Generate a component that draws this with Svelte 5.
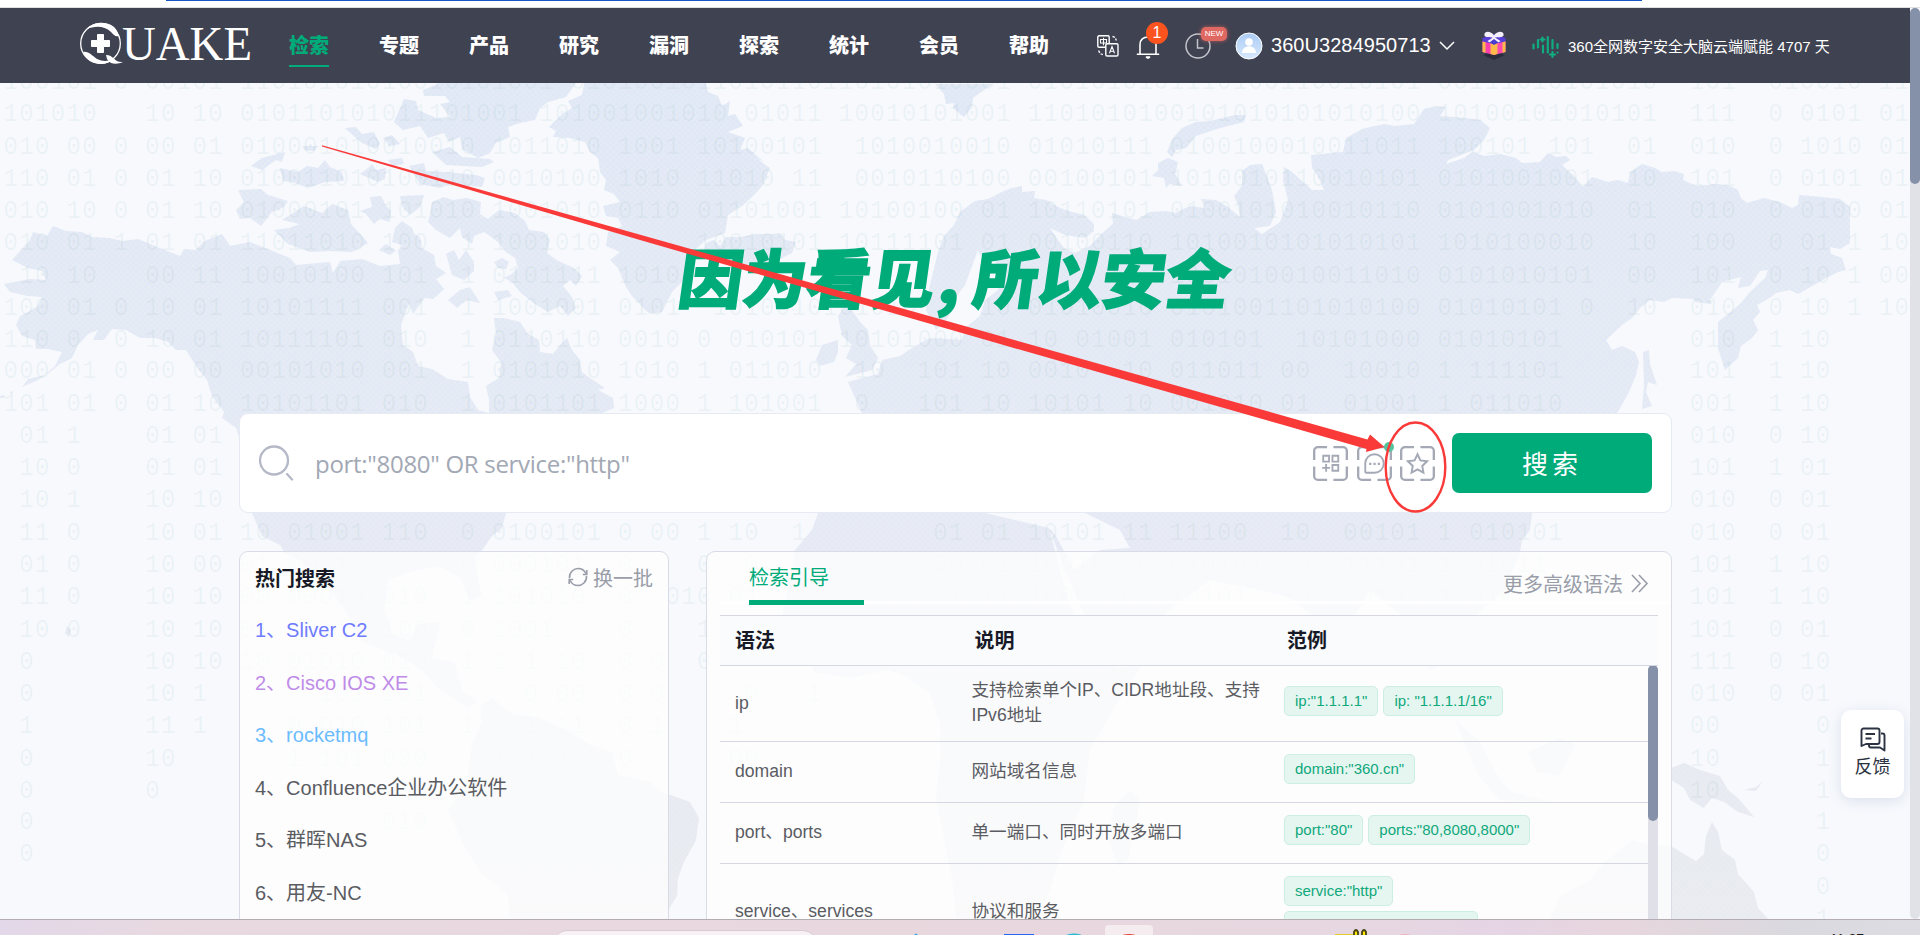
<script>
  const nav = ['检索', '专题', '产品', '研究', '漏洞', '探索', '统计', '会员', '帮助'];

  const hot = [
    { text: 'Sliver C2', color: '#6f7bff' },
    { text: 'Cisco IOS XE', color: '#c08be8' },
    { text: 'rocketmq', color: '#6bbcff' },
    { text: 'Confluence企业办公软件', color: '#5a5c62' },
    { text: '群晖NAS', color: '#5a5c62' },
    { text: '用友-NC', color: '#5a5c62' }
  ];

  const syntax = [
    { name: 'ip', desc: '支持检索单个IP、CIDR地址段、支持IPv6地址', tags: ['ip:"1.1.1.1"', 'ip: "1.1.1.1/16"'] },
    { name: 'domain', desc: '网站域名信息', tags: ['domain:"360.cn"'] },
    { name: 'port、ports', desc: '单一端口、同时开放多端口', tags: ['port:"80"', 'ports:"80,8080,8000"'] },
    { name: 'service、services', desc: '协议和服务', tags: ['service:"http"', 'services:"rtsp,https,telnet"'] }
  ];

  // Digit rows of the backdrop, as "column:digits" groups.
  const bits = [
    '0:100101 7:0 9:00101 15:11010101010010101001 36:010100101 44:10101101 53:10101010001 65:0101010101110100110010101 91:00111010101010 107:101 112:010010 119:11',
    '0:101010 9:10 12:10 15:010110101011101001 34:101001001010 47:01011 53:10010101001 65:1101010100101010101010100 91:10100101010101 107:111 112:0 114:0101 119:01',
    '0:010 4:00 7:0 9:00 12:01 15:010001010010010 31:1011010 39:1001 44:10100101 54:1010010010 65:01010111 74:0100100010011011 91:100101 98:101 103:01 107:010 112:0 114:1010 119:01',
    '0:110 4:01 7:0 9:01 12:10 15:010011010100110 31:0010100 39:1010 44:11010 50:11 54:0010110100 65:00100101 74:1010010110010101 91:0101001001 103:10 107:101 112:0 114:0101 119:01',
    '0:010 4:10 7:0 9:01 12:10 15:01000101 24:101010 31:1001010 39:0110 44:01101001 53:10100100 62:01 65:10110101 74:0100101010010110 91:0101001010 103:01 107:010 112:0 114:0100 119:01',
    '0:010 4:01 7:1 9:01 12:01 15:11011010 24:100 29:1 31:1001010 44:10010101 53:10111101 62:01 65:00100110 74:1010010101010101 91:1010100010 103:10 107:100 112:0 114:01 117:1 119:10',
    '1:10 4:10 9:00 12:11 15:10010100 24:101 29:1 31:0101111 39:1010 74:1001010010011010 91:0101010101 103:00 107:101 112:0 114:10 117:1 119:00',
    '0:100 4:01 7:0 9:10 12:01 15:10101111 24:001 29:1 31:1001001 39:0101 45:10100101 53:01010 62:10 65:01010010 74:0101001101010100 91:01010101 100:0 103:10 107:010 112:0 114:10 117:1 119:10',
    '0:110 4:0 7:0 9:10 12:01 15:10111101 24:010 29:1 31:0110110 39:0010 44:0 46:010101 53:10101000 62:01 65:10 68:01001 74:010101 82:10101000 91:01010101 107:010 112:1 114:10',
    '0:000 4:01 7:0 9:00 12:00 15:00101010 24:001 29:1 31:0101010 39:1010 44:1 46:011010 54:10 58:101 62:10 65:0010 71:10 74:011011 81:00 85:10010 91:1 93:111101 107:101 112:1 114:10',
    '0:101 4:01 7:0 9:01 12:10 15:10101101 24:010 29:1 31:0101101 39:100 42:0 44:1 46:101001 54:0 58:101 62:10 65:10101 71:10 74:001010 81:01 85:01001 91:1 93:011010 107:001 112:1 114:10',
    '1:01 4:1 9:01 12:01 107:010 112:0 114:10',
    '1:10 4:0 9:01 12:01 107:101 112:1 114:01',
    '1:10 4:1 9:10 12:10 107:010 112:0 114:01',
    '1:11 4:0 9:10 12:01 15:10 18:01001 24:110 29:0 31:0100101 39:0 41:00 44:1 46:10 50:1 59:01 62:01 65:10101 71:11 74:11100 81:10 85:00101 91:1 93:010101 107:010 112:0 114:01',
    '1:01 4:0 9:10 12:00 15:01 18:0001 29:0 31:000101 39:0 44:0 47:0 59:00 62:01 65:10010 71:10 74:010101 81:10 85:11101 91:1 93:01011 107:101 112:1 114:10',
    '1:11 4:0 9:10 12:10 15:00 18:00010 24:010 29:1 31:101010 39:0 42:01 44:0 46:01 59:11 62:11 65:10000 71:01 74:10101 81:10 85:0010 91:1 93:010 107:101 112:1 114:10',
    '1:10 4:0 9:10 12:10 15:01 18:10110 24:100 29:0 31:1001 39:0 44:1 107:101 112:0 114:01',
    '1:0 9:10 12:10 15:10 18:01010 24:010 29:1 31:1 33:1 35:10 39:0 41:0 44:0 107:111 112:0 114:10',
    '1:0 9:10 12:1 20:101 24:101 33:0 35:00 39:0 41:0 47:0 51:1 107:010 112:0 114:01',
    '1:1 9:11 12:1 18:0 20:010 24:101 29:1 33:1 35:11 39:0 41:1 46:1 107:00 115:0',
    '1:0 9:10 18:1 20:101 24:000 31:1 33:1 35:10 39:0 46:00 107:10 115:1',
    '1:0 9:0 107:10 115:1',
    '1:0 24:010 115:1',
    '1:0 115:0',
    '115:0',
    '115:1'
  ];
  const expand = (row) =>
    row.split(' ').reduce((line, part) => {
      const [col, digits] = part.split(':');
      return line.padEnd(Number(col), ' ') + digits;
    }, '');
  const bitText = bits.map(expand).join('\n');

  const land = [
    // North America with Alaska and Mexico
    'M12 260L30 240L33 232L47 236L53 226L66 231L82 232L92 237L110 238L122 241L138 239L155 246L180 256L184 249L195 250L205 241L222 234L230 246L250 242L275 252L290 258L296 265L330 262L333 273L340 261L362 259L380 266L400 264L398 250L406 243L410 232L420 237L422 248L434 255L436 266L446 273L436 279L444 289L433 299L425 298L418 307L413 314L409 303L401 325L403 345L413 352L418 366L432 369L448 379L468 382L470 397L478 410L489 413L489 400L486 386L499 378L501 362L492 350L496 334L494 318L504 318L520 322L528 334L539 340L540 352L553 354L560 345L567 338L572 350L580 360L582 372L590 378L605 388L598 390L613 398L614 408L600 414L560 460L506 513L502 528L492 536L483 549L475 556L478 580L482 596L470 600L460 578L440 566L410 572L388 580L384 610L392 634L410 640L418 624L440 622L436 642L432 658L455 662L462 690L478 702L468 708L440 690L420 668L396 654L362 642L345 610L335 596L300 560L285 553L280 545L262 536L252 513L240 440L236 428L222 418L224 412L212 396L207 380L196 366L186 350L176 350L168 342L155 338L140 338L126 330L112 329L104 340L93 340L98 330L88 334L78 345L72 358L60 364L50 372L38 380L22 387L28 379L45 375L55 366L62 352L48 349L36 349L35 340L22 336L16 325L20 316L28 312L38 306L42 297L28 296L10 292L4 284L30 279L46 280L42 271L28 268Z',
    // Greenland
    'M585 80L582 95L568 101L572 108L560 116L549 127L556 131L553 137L570 138L585 142L590 152L598 158L600 172L606 180L604 190L614 194L620 202L603 206L606 216L618 218L622 226L608 232L606 246L620 252L610 260L618 268L625 285L632 296L645 310L650 314L662 312L672 292L682 282L690 262L697 248L706 240L725 233L728 215L742 206L753 196L763 185L770 168L756 158L764 162L748 148L740 150L745 138L728 132L743 126L735 114L728 116L730 101L722 106L718 96L708 92L705 80Z',
    // Arctic islands
    'M423 90L440 83L576 83L566 97L548 102L540 108L535 120L520 123L508 127L510 137L496 143L490 153L478 158L462 149L460 137L449 142L444 133L428 138L420 126L403 130L394 122L404 99L416 101L418 110L436 118L450 117L440 104L450 102L445 96L424 96Z',
    'M345 128L356 127L362 134L374 132L380 144L376 149L362 143L355 137Z M383 138L392 135L400 144L390 146Z M303 146L318 146L314 151L304 150Z M251 166L262 158L285 152L282 162L276 160L262 170Z M280 168L298 172L307 166L318 168L325 160L330 167L342 172L344 181L325 182L308 188L292 182L283 181Z M360 174L368 168L372 164L376 170L386 168L385 179L378 182Z M388 160L402 158L404 164L392 166Z M432 152L450 147L462 157L490 159L494 162L482 167L446 165Z M409 166L424 163L426 171L446 172L476 175L485 178L482 187L450 184L440 188L420 184Z',
    'M238 190L261 189L268 195L288 201L284 207L272 212L261 226L250 218L240 219L236 210L244 202Z M274 230L289 228L300 224L282 220L304 206L322 213L332 204L348 210L351 224L362 236L368 243L352 252L330 251L310 252L288 244Z M360 211L372 207L370 197L381 196L385 204L391 211L390 222L380 219L374 224L366 214Z M400 196L424 195L420 207L410 215L402 206Z M395 228L402 221L412 228L417 240L421 252L412 253L405 246L392 242Z M379 250L386 244L396 251L390 255Z M446 254L454 250L459 260L462 256L466 250L474 262L474 271L464 280L452 275Z M494 262L502 258L509 262L506 269L498 268Z',
    'M430 215L432 202L444 197L453 200L467 198L481 202L480 214L488 219L499 210L515 213L525 221L529 230L544 232L550 240L547 253L558 261L574 268L582 276L576 286L570 280L563 286L572 297L576 308L568 316L560 306L548 312L535 304L520 292L512 282L504 278L512 274L518 268L515 258L506 252L498 242L490 236L484 232L474 236L472 244L462 237L460 228L450 238L436 230L428 222Z M448 300L460 290L470 287L480 303L466 300L457 308Z M494 292L508 290L512 296L498 300Z',
    'M706 243L714 240L720 246L726 237L740 237L756 234L773 234L780 233L785 240L796 242L792 253L776 261L750 268L730 265L716 257L704 252Z',
    // Svalbard and Novaya Zemlya
    'M935 84L944 94L946 104L954 103L953 108L960 114L964 117L972 107L973 98L984 90L992 84Z M1167 152L1172 139L1182 128L1196 122L1210 121L1235 115L1246 115L1244 122L1220 128L1196 136L1186 148L1176 150L1172 157Z M1152 176L1158 170L1158 163L1168 158L1178 162L1175 174L1182 186L1170 184L1166 188L1164 178Z',
    // Eurasia
    'M938 252L944 236L954 225L960 212L975 201L988 199L996 195L1004 191L1012 188L1022 186L1022 192L1035 191L1034 198L1046 200L1060 208L1072 212L1084 215L1094 224L1094 231L1085 238L1065 235L1050 228L1058 240L1064 248L1075 253L1090 246L1100 235L1113 224L1112 213L1122 216L1136 220L1150 212L1166 211L1175 213L1190 206L1205 208L1201 199L1216 200L1228 207L1240 217L1238 205L1234 196L1242 186L1242 171L1250 165L1262 164L1266 174L1272 190L1276 212L1270 226L1254 228L1262 234L1280 222L1288 200L1283 180L1284 167L1292 172L1312 190L1324 190L1318 176L1312 168L1311 155L1343 152L1346 138L1362 129L1384 124L1395 126L1414 124L1424 109L1436 106L1446 107L1440 116L1466 118L1480 120L1490 128L1484 140L1474 150L1456 157L1448 160L1446 164L1464 158L1472 152L1485 156L1500 154L1516 158L1522 163L1540 162L1548 153L1556 157L1566 156L1570 160L1562 165L1574 176L1583 187L1592 177L1608 182L1618 180L1628 183L1630 172L1642 164L1655 168L1662 172L1674 171L1684 174L1683 180L1696 186L1718 184L1730 186L1738 190L1741 198L1747 203L1764 198L1780 202L1792 208L1798 205L1799 195L1822 197L1840 199L1850 207L1850 243L1840 249L1830 247L1831 254L1842 258L1846 270L1838 272L1826 278L1814 285L1798 294L1790 290L1776 293L1771 297L1757 305L1760 312L1753 320L1758 330L1752 338L1741 346L1738 358L1725 370L1718 348L1718 322L1728 314L1740 304L1750 292L1765 278L1768 270L1760 271L1750 286L1738 288L1741 277L1722 282L1710 300L1712 304L1695 302L1694 299L1672 298L1664 302L1650 300L1640 308L1632 318L1622 325L1606 340L1612 350L1622 346L1635 352L1639 362L1636 375L1630 390L1622 405L1617 413L1560 460L1532 513L1530 530L1522 540L1520 552L1505 590L1470 620L1440 616L1450 660L1430 670L1410 640L1400 614L1370 590L1340 640L1330 660L1312 615L1290 598L1260 590L1210 580L1170 610L1110 660L1095 640L1065 570L1049 528L1056 536L1074 570L1100 550L1130 548L1120 530L1085 513L1040 440L1024 413L985 413L862 413L848 382L878 374L882 360L900 356L915 346L930 338L962 340L965 328L980 316L985 300L998 290L1002 272L996 262L980 255L978 250L965 285L954 300L948 318L936 330L926 310L930 285Z',
    // British Isles, Sakhalin
    'M838 316L846 304L852 310L860 322L868 330L870 345L878 358L872 370L845 377L856 364L846 358L852 345L842 336Z M816 360L822 345L838 340L838 352L834 362L820 366Z M1643 352L1649 350L1650 364L1657 385L1648 382L1646 392L1652 406L1642 409L1644 385Z',
    // Africa and Madagascar
    'M818 513L812 530L795 550L788 590L782 612L792 640L815 672L850 678L888 670L906 676L930 694L940 724L940 760L936 800L944 840L952 880L958 930L1035 930L1050 890L1062 850L1084 800L1090 750L1110 715L1142 665L1116 668L1088 640L1068 600L1049 528L985 513Z M1114 806L1130 790L1140 800L1128 860L1118 866L1108 840Z',
    // South America
    'M480 706L492 698L512 714L540 718L570 732L590 745L612 752L618 775L650 782L662 792L690 802L699 818L696 840L684 862L678 878L677 896L668 910L666 935L510 935L508 895L480 872L464 846L448 810L466 786L472 744L482 722Z',
    // Indonesia, New Guinea, Australia
    'M1455 720L1480 742L1500 780L1512 792L1550 802L1500 800L1478 775Z M1528 752L1560 738L1575 745L1560 775L1536 772Z M1671 768L1684 763L1700 770L1720 776L1728 790L1738 798L1754 817L1738 812L1724 802L1712 798L1704 808L1690 800L1684 788L1671 780Z M1744 790L1756 787L1763 781L1756 791Z M1550 919L1560 896L1590 880L1604 862L1620 850L1632 840L1650 845L1671 846L1684 854L1696 861L1704 854L1706 836L1712 822L1718 832L1722 850L1735 860L1738 874L1754 892L1758 908L1769 920L1766 935L1552 935Z',
    'M67 626L71 630L69 637L65 633Z M0 396L5 395L4 398L0 398Z M10 392L13 391L12 395Z'
  ];
</script>

<div class="screen">
  <div class="chrome"><span></span></div>

  <div class="page">
    <svg class="map" width="1920" height="935" viewBox="0 0 1920 935">
      <defs>
        <linearGradient id="tone" x1="0" y1="83" x2="0" y2="935" gradientUnits="userSpaceOnUse">
          <stop offset="0" stop-color="#dfe8f7" />
          <stop offset=".5" stop-color="#e4e9f6" />
          <stop offset="1" stop-color="#e8ebf1" />
        </linearGradient>
        <pattern id="weave" width="6" height="6" patternUnits="userSpaceOnUse">
          <path d="M0 0h3v3h-3zM3 3h3v3h-3z" fill="#f2efea" opacity=".25" />
        </pattern>
      </defs>
      {#each land as d}
        <path {d} fill="url(#tone)" />
        <path {d} fill="url(#weave)" />
      {/each}
    </svg>
    <pre class="bits">{bitText}</pre>

    <header>
      <svg class="logo" width="174" height="46" viewBox="0 0 174 46">
        <ellipse cx="20.5" cy="21.5" rx="19.8" ry="19.8" fill="none" stroke="#fff" stroke-width="1.3" />
        <path d="M7 7C15-2 32-1 37 9l2 5c-4 1-5-1-8-4C24 3 14 4 7 7z" fill="#fff" />
        <path d="M3 30c6-1 9 4 14 7 6 3 12 2 16 0C26 45 10 44 3 30z" fill="#fff" />
        <path d="M26 33c8 0 8 8 17 7-4 2-9 2-12 1-2-1-3-3-4-4z" fill="#fff" />
        <path d="M17.500 12.500h6v6h6v6h-6v6h-6v-6h-6v-6h6z" fill="#fff" stroke="#fff" stroke-width="1" stroke-linejoin="round" />
        <text x="42" y="38" font-family="'Liberation Serif', serif" font-size="48.500" fill="#fff" textLength="130" lengthAdjust="spacingAndGlyphs">UAKE</text>
      </svg>
      <nav>
        {#each nav as item, i}
          <a class:active={i === 0}>{item}</a>
        {/each}
      </nav>

      <svg class="lang" width="22" height="22" viewBox="0 0 22 22" fill="none" stroke="#fff" stroke-width="1.400">
        <path d="M8.500 12.200H2A1.200 1.200 0 0 1 .8 11V2A1.200 1.200 0 0 1 2 .8h9A1.200 1.200 0 0 1 12.200 2v6" />
        <rect x="8.800" y="8.800" width="12.200" height="12.200" rx="1.300" />
        <path d="M3.500 4.500h6v3.500h-6zM6.500 2.700v7.500M12.500 18.200l2.500-6.600 2.500 6.600M13.300 16.200h3.500" stroke-width="1.100" />
        <path d="M15.500 1.500c2 .3 3.400 1.700 3.700 4M1.800 15.500c.3 2.200 1.700 3.700 4 4" stroke-dasharray="2.500 1.300" />
      </svg>
      <div class="bell">
        <svg width="24" height="26" viewBox="0 0 24 26" fill="none" stroke="#fff" stroke-width="1.600">
          <path d="M.8 21.200h22.400M4 21V11.500C4 6.500 7.500 4 12 4s8 2.500 8 7.500V21" />
          <path d="M10 24h4l-2 1z" fill="#fff" />
        </svg>
        <b>1</b>
      </div>
      <div class="clock">
        <svg width="26" height="26" viewBox="0 0 26 26" fill="none" stroke="#c3c5cb" stroke-width="1.500">
          <circle cx="13" cy="13" r="12" />
          <path d="M12.500 6v9h6" />
        </svg>
        <b>NEW</b>
      </div>
      <svg class="avatar" width="28" height="28" viewBox="0 0 28 28">
        <defs>
          <linearGradient id="face" x2="0" y2="1"><stop stop-color="#aacbf5" /><stop offset="1" stop-color="#d9e9fb" /></linearGradient>
        </defs>
        <circle cx="14" cy="14" r="13" fill="url(#face)" stroke="#fff" stroke-width="1" />
        <circle cx="14" cy="10" r="3.800" fill="#fff" />
        <path d="M7 21c0-9 14-9 14 0z" fill="#fff" />
      </svg>
      <span class="user">360U3284950713</span>
      <svg class="caret" width="16" height="10" viewBox="0 0 16 10" fill="none" stroke="#fff" stroke-width="1.500"><path d="M1 1l7 7 7-7" /></svg>
      <svg class="gift" width="24" height="29" viewBox="0 0 24 29">
        <path d="M1 24l11-3 11 3-11 5z" fill="#2b2d3d" />
        <path d="M.5 7L12 3l11.500 4v4L12 14 .5 11z" fill="#5a3fd6" />
        <path d="M.5 10.500L12 13v11L.5 21z" fill="#ff3fae" />
        <path d="M23.500 10.500L12 13v11l11.500-3z" fill="#ff4ab0" />
        <path d="M.5 10.500l3 .7v10.600l-3-.8zM8.500 12.300L12 13v11l-3.500-1zM12 13l3.500-.7V23L12 24zM20.500 11.200l3-.7V21l-3 .8z" fill="#ffb84a" />
        <path d="M6 10.500l6-2 6 2-6 3.500z" fill="#4b3ccf" />
        <path d="M12 4.500C9-.5 1.500-.5 2.500 4.500c1 2.500 5 1 9 2.500 4-1.500 9 0 10-2.500 1-5-6.500-5-9.500 0zM11 6.500L5.500 10l2 1.500L12 8l4.500 3.500 2-1.500L13 6.500z" fill="#f4f1fb" />
      </svg>
      <svg class="wave" width="28" height="24" viewBox="0 0 28 24" stroke="#0fae80" stroke-width="2.200" stroke-linecap="round" fill="none">
        <path d="M1.500 9.500v4M6 5v7.500M10.500 2.500v4M8.500 4.500h4M11 10.500v7M15.800 2v15.500M20.500 5v8.500M25.500 9v4M20.500 17v5M18 19.500h5M25.500 17.500v.1" />
      </svg>
      <span class="days">360全网数字安全大脑云端赋能 4707 天</span>
    </header>

    <main>
      <h1>因为看见<i>,</i>所以安全</h1>

      <section class="search">
        <svg class="glass" width="36" height="36" viewBox="0 0 36 36" fill="none" stroke="#b5b9c7" stroke-width="2.300" stroke-linecap="round">
          <circle cx="15" cy="15.500" r="14" /><path d="M28 29l5 5.500" />
        </svg>
        <span class="hint">port:"8080" OR service:"http"</span>
        <div class="tools">
          {#each ['grid', 'chat', 'star'] as kind}
            <svg width="35" height="35" viewBox="0 0 36 36" fill="none" stroke="#a4a9b5" stroke-width="2.400">
              <path d="M1.200 14.500V5a3.800 3.800 0 0 1 3.800-3.800h9.500M21 1.200h10A3.800 3.800 0 0 1 34.800 5v9.500M34.800 21v10a3.800 3.800 0 0 1-3.800 3.800H21M14.500 34.800H5A3.800 3.800 0 0 1 1.200 31V21" />
              {#if kind === 'grid'}
                <path d="M10.500 10h6v6h-6zM20 10h6v6h-6zM20 19.500h6v6h-6zM13.500 18.500v8M9.500 22.500h8" stroke-width="1.900" />
              {:else if kind === 'chat'}
                <path d="M8.500 26.500V18A9.500 9.500 0 1 1 18 27.500H9.500a1 1 0 0 1-1-1z" stroke-width="1.900" />
                <path d="M12.500 18.300h2.300M16.900 18.300h2.300M21.300 18.300h2.300" stroke-width="2.300" />
              {:else}
                <path d="M18 8.500l3 6.300 6.900.9-5 4.800 1.200 6.900-6.100-3.300-6.100 3.300 1.200-6.900-5-4.800 6.900-.9z" stroke-width="2" />
              {/if}
            </svg>
          {/each}
          <em></em>
        </div>
        <button>搜索</button>
      </section>

      <div class="columns">
        <section class="panel hot">
          <div class="head">
            <h2>热门搜索</h2>
            <span>
              <svg width="20" height="20" viewBox="0 0 20 20" fill="none" stroke="#999da8" stroke-width="1.600">
                <path d="M1.500 11C1 5 6 1.500 10 1.500c4 0 6.500 2 7.800 5M18.500 9c.5 6-4.500 9.500-8.500 9.500-4 0-6.500-2-7.800-5" />
                <path d="M18.800 3v4.500h-4M1.200 17v-4.500h4" />
              </svg>
              换一批
            </span>
          </div>
          <ol>
            {#each hot as item, i}
              <li style:color={item.color}>{i + 1}、{item.text}</li>
            {/each}
          </ol>
        </section>

        <section class="panel guide">
          <div class="tabs">
            <strong>检索引导</strong>
            <span>
              更多高级语法
              <svg width="18" height="19" viewBox="0 0 18 19" fill="none" stroke="#999da8" stroke-width="1.600"><path d="M1 1l8 8.500L1 18M8 1l8 8.500L8 18" /></svg>
            </span>
          </div>
          <div class="table">
            <div class="row th"><span>语法</span><span>说明</span><span>范例</span></div>
            <div class="scroll">
              <div class="rows">
                {#each syntax as s}
                  <div class="row">
                    <span>{s.name}</span>
                    <span>{s.desc}</span>
                    <div class="tags">{#each s.tags as t}<code>{t}</code>{/each}</div>
                  </div>
                {/each}
              </div>
              <div class="bar"><i></i></div>
            </div>
          </div>
        </section>
      </div>
    </main>

    <aside>
      <svg width="26" height="25" viewBox="0 0 26 25" fill="none" stroke="#2b3242" stroke-width="1.900" stroke-linejoin="round">
        <path d="M1.500 19V3.500A2 2 0 0 1 3.500 1.500h14a2 2 0 0 1 2 2V15a2 2 0 0 1-2 2H6z" />
        <path d="M5.500 7h9.500M5.500 11.500h6M21 6.500h1.500a2 2 0 0 1 2 2V23.500L20 20.500h-9a2 2 0 0 1-2-2V18" />
      </svg>
      反馈
    </aside>
    <div class="pagebar"><i></i></div>
  </div>

  <footer>
    <span class="find"></span>
    <svg width="1920" height="15" viewBox="0 0 1920 15">
      <path d="M914 15l2-1.500 2 1.500z" fill="#2aa0d8" /><path d="M1004 14h30v1h-30z" fill="#2468f2" />
      <ellipse cx="1074" cy="16" rx="8" ry="2.500" fill="#2bb9d3" />
      <path d="M1105 15V9q0-4 4-4h40q4 0 4 4v6z" fill="#f5ecef" /><ellipse cx="1129" cy="16" rx="7" ry="2" fill="#e43d30" />
      <path d="M1335 14h18v1h-18z" fill="#e3cb2b" />
      <path d="M1354 15v-3q2-4 4 0v3M1362 15v-3q2-4 4 0v3" fill="#fbe400" stroke="#4a4410" stroke-width="1.800" />
      <ellipse cx="1405" cy="16" rx="6" ry="2" fill="#efb1ba" />
    </svg>
    <time>11:27</time>
  </footer>

  <svg class="markup" width="1920" height="935" viewBox="0 0 1920 935">
    <path d="M322 145.200L1367.500 439.500L1370 434.500L1384.500 447L1366 452L1366.500 449L1280 424L1007 346L640 240L322 146.600Z" fill="#fa3a38" />
    <ellipse cx="1415.500" cy="467" rx="29.800" ry="44.500" fill="none" stroke="#fa3a38" stroke-width="2.400" />
  </svg>
</div>

<style>
  :global(body) { margin: 0; overflow: hidden; }
  .screen, .screen * { box-sizing: border-box; }
  .screen {
    position: relative;
    display: flex;
    flex-direction: column;
    width: 1920px;
    height: 935px;
    overflow: hidden;
    font-family: 'Liberation Sans', 'Noto Sans CJK SC', sans-serif;
    color: #5a5c62;
  }
  svg { display: block; flex: none; }
  .chrome { flex: none; height: 8px; padding-left: 166px; background: #fff; border-bottom: 1px solid #dedfe2; }
  .chrome span { display: block; width: 1476px; height: 1px; background: #1456c8; }
  .page { position: relative; flex: none; height: 911px; background: #f7f9fd; overflow: hidden; }
  .map { position: absolute; left: 0; top: -8px; }
  .bits {
    position: absolute;
    left: 3.500px;
    top: 58px;
    margin: 0;
    font: 24px/29.273px 'Liberation Mono', monospace;
    letter-spacing: 1.357px;
    transform: scaleY(1.1);
    transform-origin: 0 0;
    color: rgba(70, 140, 130, .07);
  }
  header {
    position: relative;
    display: flex;
    align-items: center;
    width: 1910px;
    height: 75px;
    padding: 0 0 0 80px;
    background: #3f4251;
    color: #fff;
  }
  .logo { margin-top: -1px; }
  nav { display: flex; gap: 50px; margin-left: 35px; }
  nav a { height: 42px; padding-top: 7px; width: 40px; font-size: 20px; line-height: 30px; font-weight: 900; white-space: nowrap; border-bottom: 2px solid transparent; margin-top: 0; }
  nav .active { color: #00ab7a; border-color: #00ab7a; }
  nav { margin-top: -2px; }
  nav a { padding-top: 4px; height: 40px; margin-top: 4px; }
  .lang { margin-left: 48px; }
  .bell, .clock { position: relative; }
  .bell { margin-left: 17px; }
  .bell b {
    position: absolute; left: 10px; top: -11px; width: 22px; height: 22px; border-radius: 50%;
    background: #fc531f; font: 16px/22px 'Liberation Sans', sans-serif; text-align: center;
  }
  .clock { margin-left: 25px; }
  .clock b {
    position: absolute; left: 16px; top: -6px; width: 26px; height: 14px; border-radius: 5px;
    background: #e06863; box-shadow: 0 0 4px rgba(240, 110, 100, .6); font: 8px/14px 'Liberation Sans', sans-serif; text-align: center;
  }
  .avatar { margin-left: 24px; }
  .user { width: 160px; margin-left: 8px; font-size: 20px; letter-spacing: .05px; }
  .caret { margin-left: 8px; }
  .gift { margin-left: 27px; }
  .wave { margin: 2px 0 0 26px; }
  .days { margin: -1px 0 0 8px; font-size: 15px; white-space: nowrap; }

  main { position: relative; padding: 152px 239px 0 239px; }
  h1 {
    display: flex; height: 80px; width: 566px; margin: 0 0 0 441px;
    font-family: 'Noto Sans CJK SC', sans-serif; font-size: 64px; line-height: 80px; font-weight: 900;
    color: #00ab7a; -webkit-text-stroke: 1.500px #00ab7a; transform: skewX(-8deg); white-space: nowrap;
  }
  h1 i { width: 39px; padding-left: 4px; font-style: normal; }
  .search {
    display: flex; align-items: center; width: 1433px; height: 100px; margin-top: 98px; padding: 0 19px;
    background: #fff; border: 1px solid #e6eaf3; border-radius: 9px;
  }
  .hint { flex: 1; margin-left: 19px; margin-top: 1px; font: 24px/32px 'Open Sans', sans-serif; color: #a2a8b4; letter-spacing: -.3px; padding-left: 1px; }
  .tools { position: relative; display: flex; gap: 8.500px; margin-right: 17px; }
  .tools em { position: absolute; left: 71px; top: -4px; width: 10px; height: 10px; border-radius: 50%; background: #52c49b; }
  button {
    width: 200px; height: 60px; border: 0; border-radius: 7px; background: #00ab7a; color: #fff; padding: 0;
    font: 26px/60px 'Noto Sans CJK SC', sans-serif; letter-spacing: 4px;
  }
  .columns { display: flex; gap: 37px; margin-top: 38px; }
  .panel { height: 400px; background: rgba(254, 254, 254, .8); border: 1px solid #d9dce6; border-radius: 9px; }
  .hot { width: 430px; padding: 10px 15px 0 15px; }
  .head { display: flex; justify-content: space-between; align-items: center; height: 30px; }
  h2 { margin: 0; font-size: 20px; font-weight: 700; color: #171a26; }
  .head span, .tabs span { display: flex; align-items: center; gap: 5px; font-size: 20px; color: #999da8; }
  ol { margin: 12px 0 0; padding: 0; list-style: none; }
  li { height: 52.600px; font-size: 20px; line-height: 52.600px; }
  .guide { width: 966px; padding-left: 13px; }
  .tabs { display: flex; justify-content: space-between; align-items: center; height: 52px; padding: 0 22px 0 29px; border-bottom: 3px solid #fff; }
  .tabs strong { align-self: flex-start; width: 115px; height: 53px; padding-top: 11px; font-size: 20px; line-height: 30px; font-weight: 400; color: #00ab7a; border-bottom: 5px solid #00ab7a; }
  .tabs span { gap: 8px; padding-top: 14px; }
  .table { width: 938px; margin-top: 11px; border-top: 1px solid #d5d8e2; }
  .row { display: grid; grid-template-columns: 236.500px 312.500px 1fr; align-items: center; min-height: 61px; padding: 12px 0 13px 15px; border-bottom: 1px solid #d5d8e2; font-size: 17.600px; line-height: 25px; }
  .row > span:nth-child(2) { padding-right: 18px; }
  .th { min-height: 50px; padding: 9px 0 9px 15px; background: #fafbfd; font-size: 20px; line-height: 30px; font-weight: 700; color: #171a26; }
  .th span + span { position: relative; left: 3px; }
  .scroll { display: flex; height: 300px; overflow: hidden; }
  .rows { width: 928px; }
  .tags { display: flex; flex-wrap: wrap; column-gap: 5px; width: 250px; }
  code { height: 30px; margin-bottom: 5px; padding: 0 10px; border: 1px solid #cdeee3; border-radius: 5px; background: #e5f6f0; font: 15px/27px 'Liberation Sans', sans-serif; color: #10a87b; white-space: nowrap; }
  .bar { width: 10px; background: #e0e1e8; margin-top: -1px; border-radius: 5px 5px 0 0; }
  .bar i { display: block; height: 156px; border-radius: 5px; background: #8591a8; }
  aside {
    position: absolute; left: 1841px; top: 702px; display: flex; flex-direction: column; align-items: center; gap: 2px;
    width: 63px; height: 88px; padding-top: 17px; border-radius: 10px; background: #fff; box-shadow: 0 3px 14px rgba(80, 100, 140, .16);
    font-size: 18px; line-height: 27px; color: #2b3242;
  }
  .pagebar { position: absolute; left: 1910px; top: 0; width: 10px; height: 911px; background: #e1e2e7; border-radius: 5px; }
  .pagebar i { display: block; height: 176px; border-radius: 5px; background: #8591a8; }
  footer {
    position: relative; flex: none; height: 16px; overflow: hidden; border-top: 1px solid #b3acb2;
    background: linear-gradient(90deg, #e3d8e9 0, #e8d9e1 160px, #e9d7de 900px, #e6d7e0 1330px, #e5d5e5 1500px, #e7d6dd 1620px, #d9d9df 1800px, #dcdce2 100%);
  }
  .find { position: absolute; left: 553px; top: 10px; width: 264px; height: 30px; border-radius: 14px; background: #f7f0f4; border: 1px solid #d9cbd2; }
  footer svg { position: absolute; left: 0; top: 0; }
  time { position: absolute; left: 1830px; top: 11px; font: 14px/16px 'Liberation Sans', sans-serif; color: #1c1c20; }
  .markup { position: absolute; left: 0; top: 0; }
</style>
